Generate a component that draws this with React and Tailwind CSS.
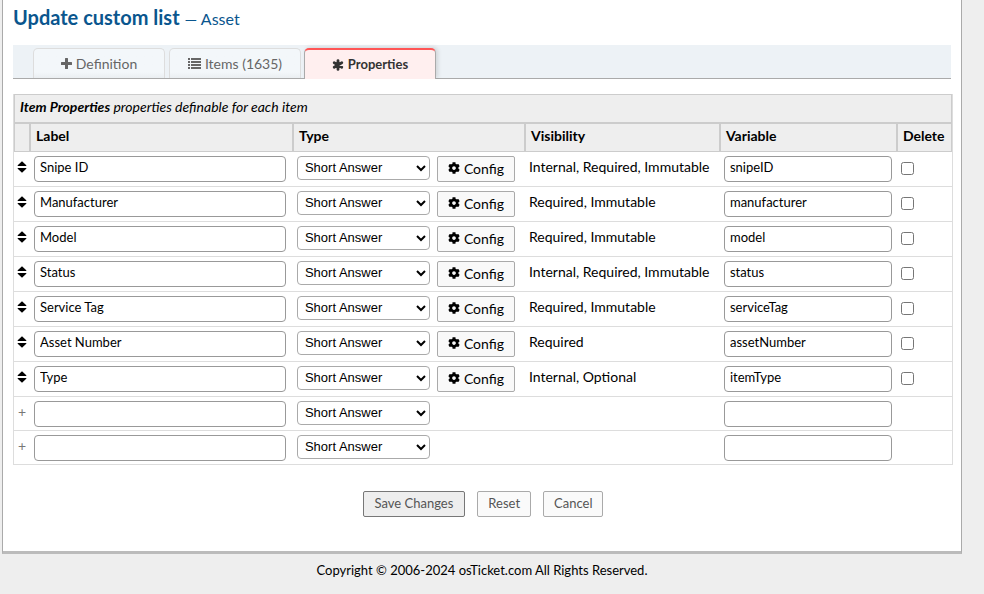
import React from "react";
import { FaCog } from "react-icons/fa";

const properties = [
  { label: "Snipe ID", visibility: "Internal, Required, Immutable", variable: "snipeID" },
  { label: "Manufacturer", visibility: "Required, Immutable", variable: "manufacturer" },
  { label: "Model", visibility: "Required, Immutable", variable: "model" },
  { label: "Status", visibility: "Internal, Required, Immutable", variable: "status" },
  { label: "Service Tag", visibility: "Required, Immutable", variable: "serviceTag" },
  { label: "Asset Number", visibility: "Required", variable: "assetNumber" },
  { label: "Type", visibility: "Internal, Optional", variable: "itemType" },
];

const inputClass =
  "block h-[26px] w-full rounded-[4px] border border-[#999] bg-white px-[5px] pb-1 text-[13px] leading-5 text-black";
const headClass = "border border-[#ccc] px-[5px] pb-[3px] text-left text-[14px] leading-6 font-bold";
const cellClass = "border-b border-[#ddd] pt-1 align-top";
const plainButtonClass = "h-[26px] rounded-[2px] border border-[#aaa] bg-[#fafafa] px-[10px]";

function PlusIcon() {
  return (
    <svg width="11" height="11" viewBox="0 0 11 11" fill="currentColor" aria-hidden="true">
      <path d="M4 0.6 Q4 0 4.6 0 H6.4 Q7 0 7 0.6 V4 H10.4 Q11 4 11 4.6 V6.4 Q11 7 10.4 7 H7 V10.4 Q7 11 6.4 11 H4.6 Q4 11 4 10.4 V7 H0.6 Q0 7 0 6.4 V4.6 Q0 4 0.6 4 H4 Z" />
    </svg>
  );
}

function ListIcon() {
  return (
    <svg width="13" height="11" viewBox="0 0 13 11" fill="currentColor" aria-hidden="true">
      {[0, 3, 6, 9].map((y) => (
        <g key={y}>
          <rect x="0" y={y} width="2" height="2" />
          <rect x="3" y={y} width="10" height="2" />
        </g>
      ))}
    </svg>
  );
}

function AsteriskIcon() {
  return (
    <svg
      width="12"
      height="12"
      viewBox="0 0 12 12"
      stroke="currentColor"
      strokeWidth="2.8"
      strokeLinecap="round"
      aria-hidden="true"
    >
      <path d="M6 1.6 V10.4 M2.2 3.8 L9.8 8.2 M2.2 8.2 L9.8 3.8" />
    </svg>
  );
}

function SortIcon() {
  return (
    <svg width="10" height="12" viewBox="0 0 10 12" fill="currentColor" aria-hidden="true">
      <path d="M5 0.3 L9.3 4.2 Q9.7 5 8.9 5 H1.1 Q0.3 5 0.7 4.2 Z" />
      <path d="M5 11.7 L9.3 7.8 Q9.7 7 8.9 7 H1.1 Q0.3 7 0.7 7.8 Z" />
    </svg>
  );
}

function TypeSelect({ name }) {
  return (
    <select
      aria-label={name}
      className="h-6 w-[133px] rounded-[4px] border border-[#aaa] bg-white px-[3px] pb-px font-['Liberation_Sans',Arial,sans-serif] text-[13px] text-black"
    >
      <option>Short Answer</option>
    </select>
  );
}

function Tab({ icon, children, active }) {
  return (
    <li className="flex">
      <a
        href="#"
        aria-current={active ? "page" : undefined}
        className={
          active
            ? "-mb-px -ml-px flex w-[132px] items-center justify-center gap-1 rounded-t-[5px] border border-t-2 border-b-0 border-[#aaa] border-t-[#f55] bg-[#ffefef] text-[13px] font-bold text-[#333] shadow-[2px_-1px_4px_rgba(0,0,0,0.12)] [clip-path:inset(-4px_-6px_0_-4px)]"
            : "flex w-[132px] items-center justify-center gap-1 rounded-t-[5px] border border-b-0 border-[#ddd] bg-[#f3f7fa] bg-linear-to-t from-[#eaeef1] to-[#f3f7fa] to-20% text-[14px] text-[#666]"
        }
      >
        {icon}
        {children}
      </a>
    </li>
  );
}

export default function App() {
  return (
    <div className="min-h-screen bg-[#eee] pr-[22px] pl-[2px] font-[Lato,sans-serif] text-[14px] text-black">
      <main className="border-x border-b-[3px] border-[#aaa] border-b-[#bbb] bg-white pr-2 pb-[34px] pl-[10px]">
        <h1 className="flex items-baseline gap-[5px] pt-[2px] text-[20px] leading-[30px] font-bold text-[#0a568e]">
          Update custom list
          <small className="text-[16px] font-normal">— Asset</small>
        </h1>

        <nav className="mt-[11px] mr-[2px] border-b border-[#aaa] bg-[#edf2f6] pt-[3px] pl-5">
          <ul className="flex h-[30px] gap-1">
            <Tab icon={<PlusIcon />}>Definition</Tab>
            <Tab icon={<ListIcon />}>Items (1635)</Tab>
            <Tab icon={<AsteriskIcon />} active>
              Properties
            </Tab>
          </ul>
        </nav>

        <form onSubmit={(e) => e.preventDefault()}>
          <table className="mt-[15px] w-full table-fixed border-separate border-spacing-0 border-x border-[#ddd]">
            <colgroup>
              <col className="w-[16px]" />
              <col />
              <col className="w-[232px]" />
              <col className="w-[195px]" />
              <col className="w-[177px]" />
              <col className="w-[55px]" />
            </colgroup>
            <thead className="bg-[#eee]">
              <tr>
                <th
                  colSpan={6}
                  className="h-[29px] border border-[#ccc] px-[5px] pb-[3px] text-left text-[14px] leading-5 font-normal italic"
                >
                  <strong className="font-bold">Item Properties</strong> properties definable for each item
                </th>
              </tr>
              <tr className="h-[29px]">
                <th className="border border-[#ccc]"></th>
                <th className={headClass}>Label</th>
                <th className={headClass}>Type</th>
                <th className={headClass}>Visibility</th>
                <th className={headClass}>Variable</th>
                <th className={headClass}>Delete</th>
              </tr>
            </thead>
            <tbody>
              {properties.map((p) => (
                <tr key={p.variable} className="h-[35px]">
                  <td className={cellClass}>
                    <div className="flex h-[22px] items-center justify-center">
                      <SortIcon />
                    </div>
                  </td>
                  <td className={cellClass + " pr-[7px] pl-1"}>
                    <input type="text" aria-label="Label" defaultValue={p.label} className={inputClass} />
                  </td>
                  <td className={cellClass + " pl-1"}>
                    <div className="flex items-start gap-[7px]">
                      <TypeSelect name={"Type of " + p.label} />
                      <button
                        type="button"
                        className="flex h-[26px] w-[78px] items-center justify-center gap-1 rounded-[2px] border border-[#aaa] bg-[#f9f9f9] pb-[2px] text-[14px]"
                      >
                        <FaCog size={12} />
                        Config
                      </button>
                    </div>
                  </td>
                  <td className={cellClass + " pl-1 leading-[22px] whitespace-nowrap"}>{p.visibility}</td>
                  <td className={cellClass + " pr-[5px] pl-1"}>
                    <input type="text" aria-label="Variable" defaultValue={p.variable} className={inputClass} />
                  </td>
                  <td className={cellClass + " pl-1"}>
                    <div className="flex h-6 items-center">
                      <input type="checkbox" aria-label={"Delete " + p.label} className="size-[13px]" />
                    </div>
                  </td>
                </tr>
              ))}
              {[1, 2].map((n) => (
                <tr key={n} className="h-[34px]">
                  <td className={cellClass + " text-center leading-[22px] text-[#777]"}>+</td>
                  <td className={cellClass + " pr-[7px] pl-1"}>
                    <input type="text" aria-label={"New label " + n} className={inputClass} />
                  </td>
                  <td className={cellClass + " pl-1"}>
                    <div className="flex">
                      <TypeSelect name={"New type " + n} />
                    </div>
                  </td>
                  <td className={cellClass}></td>
                  <td className={cellClass + " pr-[5px] pl-1"}>
                    <input type="text" aria-label={"New variable " + n} className={inputClass} />
                  </td>
                  <td className={cellClass}></td>
                </tr>
              ))}
            </tbody>
          </table>

          <div className="mt-[26px] flex justify-center gap-3 text-[13px] text-[#555]">
            <button type="submit" className="h-[26px] rounded-[2px] border border-[#777] bg-[#eee] px-[11px]">
              Save Changes
            </button>
            <button type="reset" className={plainButtonClass}>
              Reset
            </button>
            <button type="button" className={plainButtonClass}>
              Cancel
            </button>
          </div>
        </form>
      </main>
      <footer className="pt-[6px] text-center text-[13px] leading-5">
        Copyright © 2006-2024 osTicket.com All Rights Reserved.
      </footer>
    </div>
  );
}
